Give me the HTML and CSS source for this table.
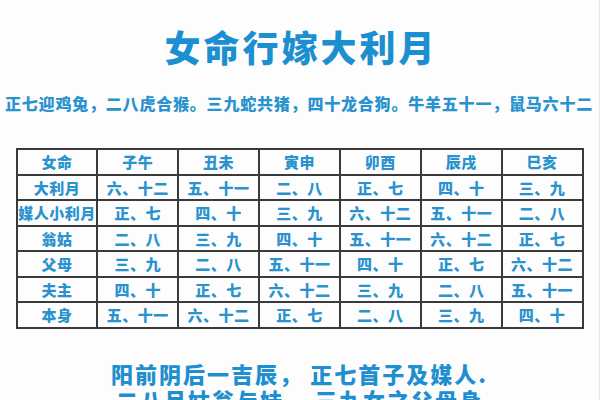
FILE: index.html
```html
<!DOCTYPE html>
<html lang="zh-CN">
<head>
<meta charset="utf-8">
<title>女命行嫁大利月</title>
<link rel="stylesheet" href="styles.css">
</head>
<body>
<div class="page">
  <h1 class="title">女命行嫁大利月</h1>
  <p class="rhyme">正七迎鸡兔，二八虎合猴。三九蛇共猪，四十龙合狗。牛羊五十一，鼠马六十二</p>
  <table class="grid">
    <tr><td>女命</td><td>子午</td><td>丑未</td><td>寅申</td><td>卯酉</td><td>辰戌</td><td>巳亥</td></tr>
    <tr><td>大利月</td><td>六、十二</td><td>五、十一</td><td>二、八</td><td>正、七</td><td>四、十</td><td>三、九</td></tr>
    <tr><td>媒人小利月</td><td>正、七</td><td>四、十</td><td>三、九</td><td>六、十二</td><td>五、十一</td><td>二、八</td></tr>
    <tr><td>翁姑</td><td>二、八</td><td>三、九</td><td>四、十</td><td>五、十一</td><td>六、十二</td><td>正、七</td></tr>
    <tr><td>父母</td><td>三、九</td><td>二、八</td><td>五、十一</td><td>四、十</td><td>正、七</td><td>六、十二</td></tr>
    <tr><td>夫主</td><td>四、十</td><td>正、七</td><td>六、十二</td><td>三、九</td><td>二、八</td><td>五、十一</td></tr>
    <tr><td>本身</td><td>五、十一</td><td>六、十二</td><td>正、七</td><td>二、八</td><td>三、九</td><td>四、十</td></tr>
  </table>
  <div class="verse">
    <p class="line">阳前阴后一吉辰， 正七首子及媒人.</p>
    <p class="line">二八月姑翁与妹， 三九女之父母身</p>
  </div>
</div>
</body>
</html>
```

FILE: styles.css
```css
html, body {
  margin: 0;
  padding: 0;
}
body {
  width: 600px;
  height: 400px;
  overflow: hidden;
  background: #fdfdfd;
  font-family: "Noto Sans CJK SC", "Noto Sans", sans-serif;
  color: #2590cd;
}
.page {
  width: 600px;
  height: 400px;
  display: flex;
  flex-direction: column;
  align-items: center;
  box-sizing: border-box;
  border-right: 1px solid #e8e8e8;
}
.title {
  margin: 28px 0 0;
  padding-left: 3px;
  font-size: 36px;
  line-height: 36px;
  font-weight: 900;
  letter-spacing: 3px;
  color: #1c8fd0;
}
.rhyme {
  margin: 31px 0 0;
  align-self: flex-start;
  padding-left: 5px;
  font-size: 16px;
  line-height: 16px;
  font-weight: 900;
  letter-spacing: 0.8px;
  white-space: nowrap;
  color: #2a92cf;
}
.grid {
  margin-top: 37px;
  width: 568px;
  table-layout: fixed;
  border-collapse: collapse;
  border: 2px solid #333;
}
.grid td {
  height: 23.5px;
  padding: 0;
  border: 2px solid #3a3a3a;
  text-align: center;
  vertical-align: middle;
  font-size: 15px;
  line-height: 15px;
  font-weight: 900;
  letter-spacing: 0.5px;
  white-space: nowrap;
  color: #2a92cf;
}
.verse {
  margin-top: 31px;
  display: flex;
  flex-direction: column;
  align-items: center;
}
.line {
  margin: 0;
  font-size: 22px;
  line-height: 26px;
  font-weight: 900;
  letter-spacing: 2px;
  white-space: nowrap;
  color: #1f8fd0;
}
```
